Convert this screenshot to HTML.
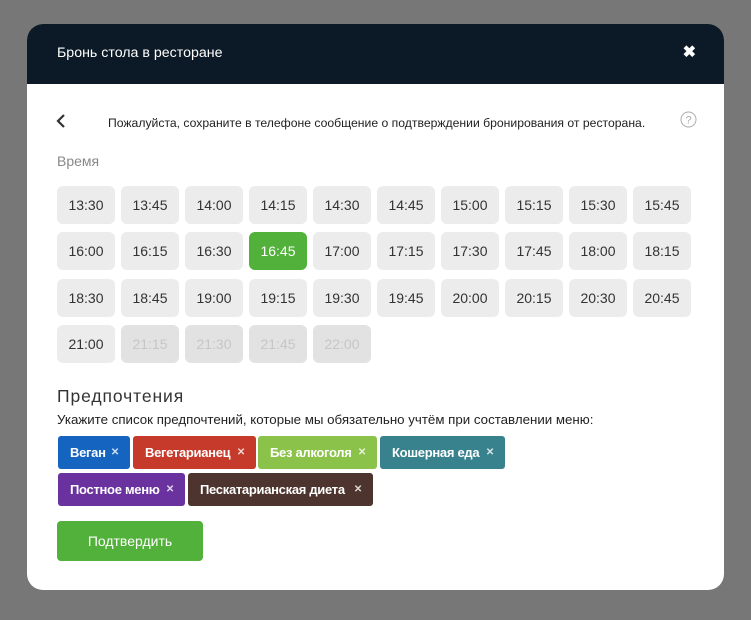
<!DOCTYPE html><html><head><meta charset="utf-8"><style>
*{box-sizing:border-box;margin:0;padding:0}
body{width:751px;height:620px;background:#777;font-family:"Liberation Sans",sans-serif;position:relative;overflow:hidden}
.m{position:absolute;left:27px;top:24px;width:697px;height:566px;background:#fff;border-radius:16px;overflow:hidden}
.h{position:absolute;left:0;top:0;width:100%;height:60px;background:#0b1a26;color:#fff}
.h .t{position:absolute;left:30px;top:21px;font-size:14.2px}
.h .x{position:absolute;right:28px;top:18px;font-size:16px;font-weight:bold}
.a{position:absolute;font-size:12px;color:#222;white-space:nowrap}
.tb{position:absolute;width:58px;height:38px;background:#ececec;border-radius:6px;font-size:14px;color:#333;text-align:center;line-height:38px}
.tb.s{background:#52b13a;color:#fff}
.tb.d{background:#e2e2e2;color:#c6c6c6}
.tag{position:absolute;height:33px;border-radius:3px;color:#fff;font-size:13px;font-weight:bold;line-height:33px;padding-left:12px;letter-spacing:-0.3px;white-space:nowrap}
.tag i{position:absolute;right:11px;top:0;font-style:normal;font-size:10px;opacity:.8}
.btn{position:absolute;left:30px;top:497px;width:146px;height:40px;background:#52b13a;color:#fff;border-radius:4px;text-align:center;line-height:40px;font-size:14px}
</style></head><body><div class="m">
<div class="h"><div class="t">Бронь стола в ресторане</div><div class="x">✖</div></div>
<svg style="position:absolute;left:28px;top:89px" width="12" height="16"><path d="M9 2L3 8l6 6" stroke="#333" stroke-width="2.2" fill="none"/></svg>
<div class="a" style="left:81px;top:92px;font-size:12.2px">Пожалуйста, сохраните в телефоне сообщение о подтверждении бронирования от ресторана.</div>
<svg style="position:absolute;left:653px;top:87px" width="17" height="17"><circle cx="8.5" cy="8.5" r="7.5" stroke="#aaa" fill="none"/><text x="8.5" y="12.5" font-size="11" text-anchor="middle" fill="#aaa" font-family="Liberation Sans">?</text></svg>
<div class="a" style="left:30px;top:129px;font-size:14px;color:#888">Время</div>
<div id="g"></div>
<div class="a" style="left:30px;top:362px;font-size:17.5px;letter-spacing:0.9px;color:#333">Предпочтения</div>
<div class="a" style="left:30px;top:388px;font-size:13.3px">Укажите список предпочтений, которые мы обязательно учтём при составлении меню:</div>
<div class="tag" style="left:31px;top:412px;width:72px;background:#1565c0">Веган<i>✕</i></div>
<div class="tag" style="left:106px;top:412px;width:123px;background:#c53a2b">Вегетарианец<i>✕</i></div>
<div class="tag" style="left:231px;top:412px;width:119px;background:#8bc34a">Без алкоголя<i>✕</i></div>
<div class="tag" style="left:353px;top:412px;width:125px;background:#37828d">Кошерная еда<i>✕</i></div>
<div class="tag" style="left:31px;top:449px;width:127px;background:#6a329f">Постное меню<i>✕</i></div>
<div class="tag" style="left:161px;top:449px;width:185px;background:#4e342e">Пескатарианская диета<i>✕</i></div>
<div class="btn">Подтвердить</div>
</div>
<script>
var t=["13:30","13:45","14:00","14:15","14:30","14:45","15:00","15:15","15:30","15:45","16:00","16:15","16:30","16:45","17:00","17:15","17:30","17:45","18:00","18:15","18:30","18:45","19:00","19:15","19:30","19:45","20:00","20:15","20:30","20:45","21:00","21:15","21:30","21:45","22:00"],h="",ys=[162,208,255,301];
t.forEach(function(v,i){var c="tb"+(i==13?" s":"")+(i>30?" d":"");h+='<div class="'+c+'" style="left:'+(30+(i%10)*64)+'px;top:'+ys[Math.floor(i/10)]+'px">'+v+'</div>'});
document.getElementById("g").innerHTML=h;
</script>
</body></html>
